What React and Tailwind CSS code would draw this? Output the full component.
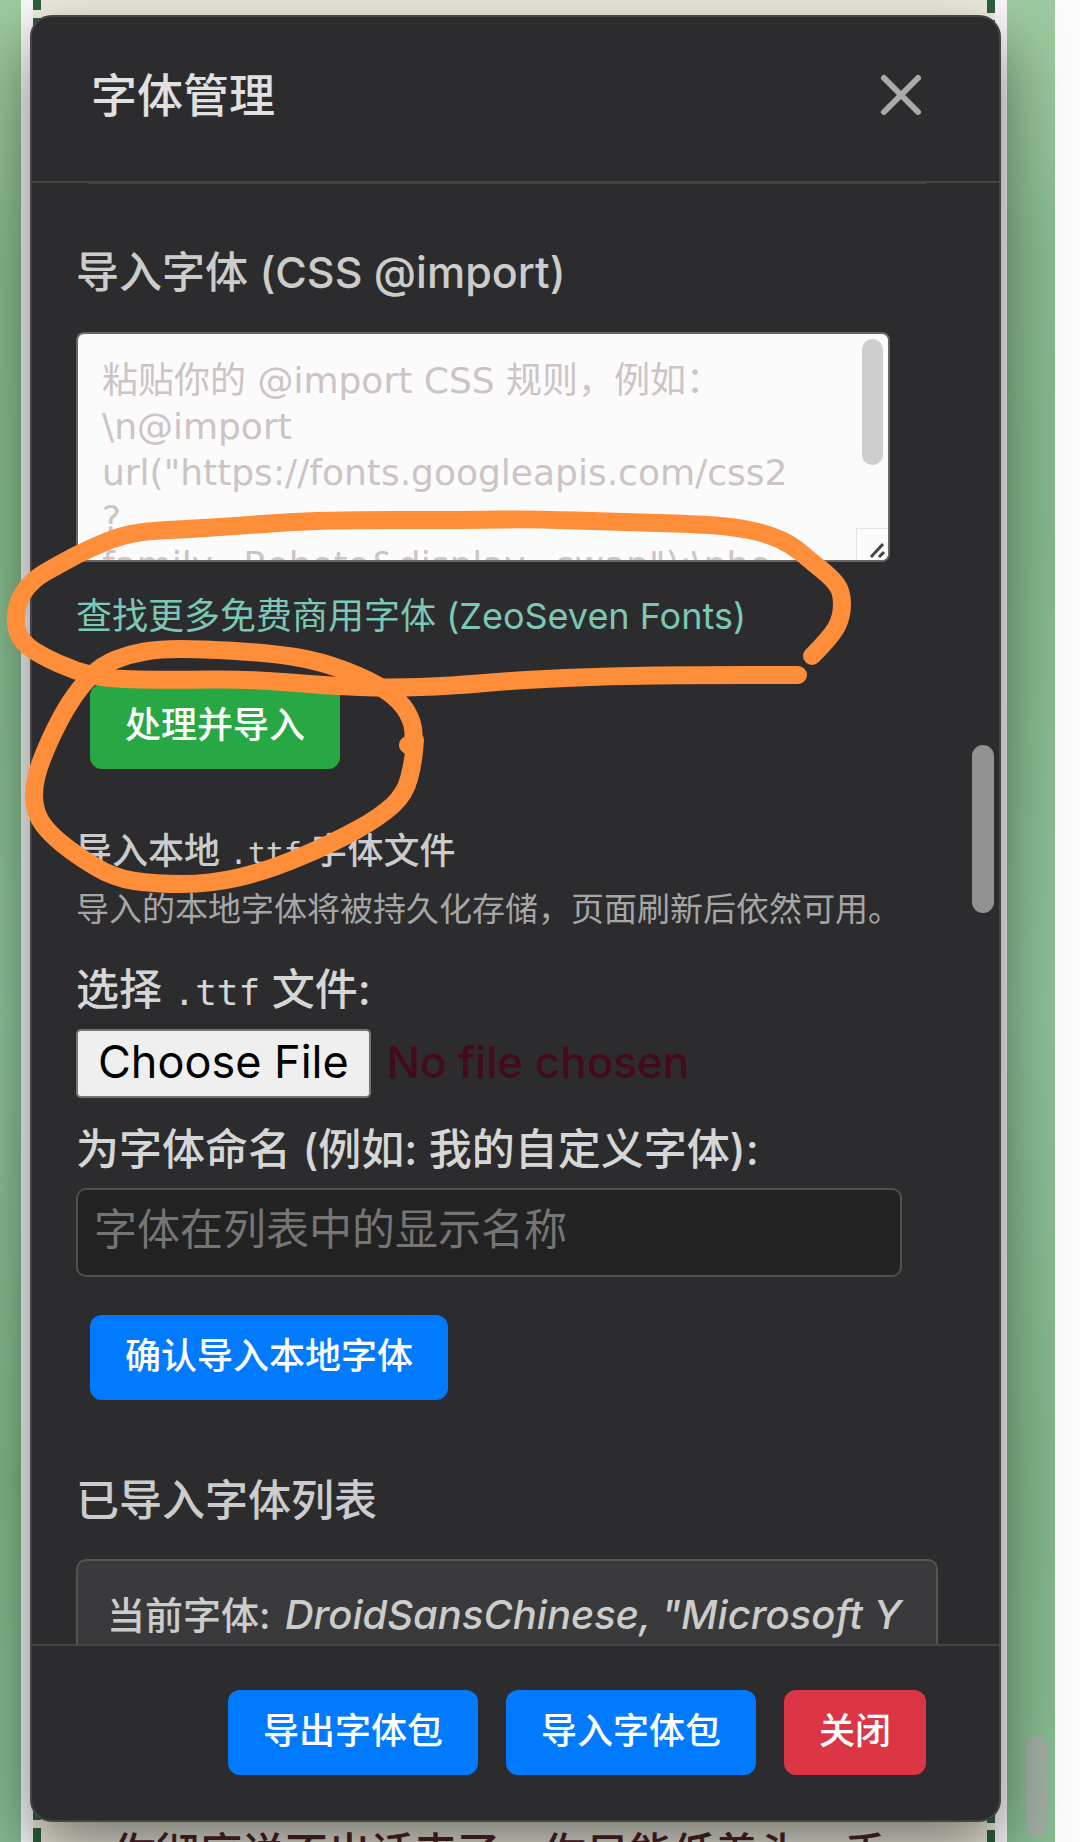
import React, { useState } from 'react';
import { clsx } from 'clsx';

const PLACEHOLDER = [
    '粘贴你的 @import CSS 规则，例如：',
    '\\n@import',
    'url("https://fonts.googleapis.com/css2',
    '?',
    'family=Roboto&display=swap");\\nbo',
].join('\n');

const variants = {
    green: 'bg-[#28a745]',
    blue: 'bg-[#007bff]',
    red: 'bg-[#dc3545]',
};

const LINK_LOOP = [
    [812, 656], [832, 636], [842, 616], [842, 592], [832, 578], [812, 562], [792, 545], [768, 534],
    [735, 527], [695, 524], [620, 522], [530, 519], [470, 520], [320, 520], [250, 525], [190, 529], [130, 532],
    [88, 549], [58, 565], [32, 580], [17, 602], [15, 628], [24, 644], [42, 656], [75, 671], [108, 679],
    [170, 680], [250, 679], [330, 686], [390, 688], [450, 686], [520, 680], [610, 676], [700, 675], [798, 675],
];

const BUTTON_LOOP = [
    [408, 745], [413, 748], [414, 724], [400, 700], [370, 680], [320, 661], [270, 653], [200, 649], [160, 649],
    [130, 654], [102, 665], [80, 687], [60, 718], [40, 762], [33, 790], [36, 815], [50, 834], [76, 855],
    [114, 878], [155, 884], [210, 884], [267, 871], [333, 843], [380, 817], [405, 794], [413, 763], [415, 740],
];

// 用中点二次曲线把点连成平滑的笔迹
const toPath = (points) => {
    let d = `M${points[0][0]} ${points[0][1]}`;
    for (let i = 1; i < points.length - 1; i++) {
        const [x, y] = points[i];
        const [nx, ny] = points[i + 1];
        d += ` Q${x} ${y} ${(x + nx) / 2} ${(y + ny) / 2}`;
    }
    const [lx, ly] = points[points.length - 1];
    return `${d} L${lx} ${ly}`;
};

const ActionButton = ({ variant, className, children, ...rest }) => (
    <button
        type="button"
        className={clsx('h-[85px] rounded-xl px-[35px] pb-1 text-[36px] leading-[44px] font-medium text-white', variants[variant], className)}
        {...rest}
    >
        {children}
    </button>
);

// 弹窗后面的聊天页面
const ChatBackdrop = () => (
    <div className="flex h-screen overflow-hidden bg-[#fcfcfc]">
        <div className="flex flex-1 bg-[linear-gradient(180deg,#9fca9f_0%,#88b98d_14%,#84b98a_30%,#8cc097_55%,#82b687_80%,#86bb90_100%)] pr-12 pl-[21px]">
            <div className="flex flex-1 bg-[#f8f9f8] px-3">
                <div className="w-2 bg-[repeating-linear-gradient(180deg,#2f5f3f_0px,#2f5f3f_10px,#f0eee0_10px,#f0eee0_18px,#2f5f3f_18px,#2f5f3f_181px)]" />
                <div className="flex flex-1 flex-col justify-end bg-[#eeecdf] px-[72px]">
                    <p className="h-[10px] overflow-hidden text-[43px] leading-[43px] font-medium whitespace-nowrap text-[#4f2529]">
                        你彻底说不出话来了，你只能低着头，手
                    </p>
                </div>
                <div className="w-2 bg-[repeating-linear-gradient(180deg,#2f5f3f_0px,#2f5f3f_13px,#f0eee0_13px,#f0eee0_20px,#2f5f3f_20px,#2f5f3f_181px)]" />
            </div>
        </div>
        <div className="w-[25px]" />
        <div className="absolute right-[33px] bottom-1 h-[103px] w-[21px] rounded-full bg-[#a3aca6]/90" />
    </div>
);

// 手绘的橙色圈注
const Annotation = () => (
    <svg
        className="pointer-events-none absolute top-0 left-0"
        width="1080"
        height="1842"
        viewBox="0 0 1080 1842"
        fill="none"
        stroke="#ff8e3a"
        strokeWidth="18"
        strokeLinecap="round"
        strokeLinejoin="round"
        aria-hidden="true"
    >
        <path d={toPath(LINK_LOOP)} />
        <path d={toPath(BUTTON_LOOP)} />
    </svg>
);

const FontManager = () => {
    const [css, setCss] = useState('');
    const [fontName, setFontName] = useState('');
    const [open, setOpen] = useState(true);

    if (!open) return null;

    return (
        <div className="absolute inset-0 flex pt-[15px] pr-[79px] pb-5 pl-[30px]">
            <div
                role="dialog"
                aria-labelledby="font-title"
                className="relative flex flex-1 flex-col overflow-hidden rounded-[22px] border-2 border-[#444] bg-[#2c2c2e] font-medium text-[#ccc] shadow-[0_26px_64px_rgba(0,0,0,0.5)]"
            >
                <header className="flex h-[166px] shrink-0 items-start justify-between border-b-2 border-[#444] pt-12 pr-[73px] pl-[59px]">
                    <h2 id="font-title" className="text-[46px] leading-[60px] font-medium text-[#e0e0e0]">字体管理</h2>
                    <button type="button" aria-label="关闭弹窗" className="flex h-[60px] items-center" onClick={() => setOpen(false)}>
                        <svg width="50" height="50" viewBox="0 0 50 50" stroke="#aaa" strokeWidth="6" strokeLinecap="round">
                            <path d="M8 8 L42 42 M42 8 L8 42" />
                        </svg>
                    </button>
                </header>

                <div className="flex min-h-0 flex-1 flex-col items-start overflow-hidden pr-[61px] pl-11">
                    <div className="w-full shrink-0 px-3">
                        <hr className="h-px border-0 bg-[#444]" />
                    </div>

                    <label htmlFor="css-import" className="mt-[62px] text-[43px] leading-[52px]">导入字体 (CSS @import)</label>
                    <div className="relative mt-[34px] w-full shrink-0 pr-12">
                        <textarea
                            id="css-import"
                            className="block h-[230px] w-full resize-none overflow-hidden rounded-lg border-2 border-[#666] bg-[#fbfbfb] p-6 font-['DejaVu_Sans','Noto_Sans_CJK_SC',sans-serif] text-[36px] leading-[46px] font-normal text-[#333] outline-none placeholder:text-[#cdc3c5]"
                            placeholder={PLACEHOLDER}
                            value={css}
                            onChange={(e) => setCss(e.target.value)}
                        />
                        <div className="absolute top-[7px] right-[55px] h-[126px] w-[21px] rounded-full bg-[#cecece]" />
                        <div className="absolute right-[50px] bottom-[2px] flex h-8 w-8 items-end justify-end rounded-br-md border-t border-l border-[#e2e2e2] bg-[#fbfbfb]">
                            <svg width="20" height="20" viewBox="0 0 20 20" stroke="#444" strokeWidth="3">
                                <path d="M3 17 L15 4 M11 17 L16 12" />
                            </svg>
                        </div>
                    </div>

                    <a href="#fonts" className="mt-8 text-[36px] leading-[44px] font-normal text-[#7bc8b5]">
                        查找更多免费商用字体 (ZeoSeven Fonts)
                    </a>
                    <ActionButton variant="green" className="mt-[46px] ml-3.5 shrink-0">处理并导入</ActionButton>

                    <h3 className="mt-[60px] text-[36px] leading-[44px] font-medium">
                        导入本地 <code className="font-['DejaVu_Sans_Mono',monospace] text-[30px] leading-none">.ttf</code> 字体文件
                    </h3>
                    <p className="mt-4 text-[33px] leading-[40px] font-normal whitespace-nowrap text-[#a6a6a6]">
                        导入的本地字体将被持久化存储，页面刷新后依然可用。
                    </p>

                    <label htmlFor="ttf-file" className="mt-[34px] text-[43px] leading-[52px] text-[#d6d6d6]">
                        选择 <code className="font-['DejaVu_Sans_Mono',monospace] text-[36px] leading-none">.ttf</code> 文件:
                    </label>
                    <input
                        id="ttf-file"
                        type="file"
                        accept=".ttf"
                        className="mt-3.5 h-[69px] w-full shrink-0 text-[44px] leading-[60px] text-[#430b19] file:mr-4 file:h-[69px] file:rounded-[5px] file:border-2 file:border-solid file:border-[#767676] file:bg-[#efefef] file:px-5 file:pb-1 file:text-[45px] file:leading-[60px] file:font-normal file:text-black"
                    />

                    <label htmlFor="font-name" className="mt-[25px] text-[43px] leading-[52px] text-[#d6d6d6]">
                        为字体命名 (例如: 我的自定义字体):
                    </label>
                    <div className="mt-[13px] w-full shrink-0 pr-9">
                        <input
                            id="font-name"
                            type="text"
                            className="block h-[89px] w-full rounded-[10px] border-2 border-[#505050] bg-[#222] px-4 pb-2 text-[43px] font-normal text-[#ddd] outline-none placeholder:text-[#757575]"
                            placeholder="字体在列表中的显示名称"
                            value={fontName}
                            onChange={(e) => setFontName(e.target.value)}
                        />
                    </div>
                    <ActionButton variant="blue" className="mt-[38px] ml-3.5 shrink-0">确认导入本地字体</ActionButton>

                    <h3 className="mt-[74px] text-[43px] leading-[52px] font-medium">已导入字体列表</h3>
                    <div className="mt-[33px] w-full shrink-0 overflow-hidden rounded-[10px] border-2 border-[#555] bg-[#3a3a3c] px-[29px] py-[29px]">
                        <p className="text-[38px] leading-[50px] whitespace-nowrap">
                            当前字体: <em className="ml-1 text-[40px] leading-none">DroidSansChinese, "Microsoft Y</em>
                        </p>
                    </div>
                </div>

                <footer className="flex h-[176px] shrink-0 items-start justify-end gap-7 border-t-2 border-[#444] pt-11 pr-[73px]">
                    <ActionButton variant="blue">导出字体包</ActionButton>
                    <ActionButton variant="blue">导入字体包</ActionButton>
                    <ActionButton variant="red" onClick={() => setOpen(false)}>关闭</ActionButton>
                </footer>

                <div className="absolute top-[728px] right-[5px] h-[168px] w-[22px] rounded-full bg-[#929292]" />
            </div>
        </div>
    );
};

export default function App() {
    return (
        <main className="relative overflow-hidden font-['Inter','Noto_Sans_CJK_SC',sans-serif]" lang="zh-CN">
            <ChatBackdrop />
            <FontManager />
            <Annotation />
        </main>
    );
}
